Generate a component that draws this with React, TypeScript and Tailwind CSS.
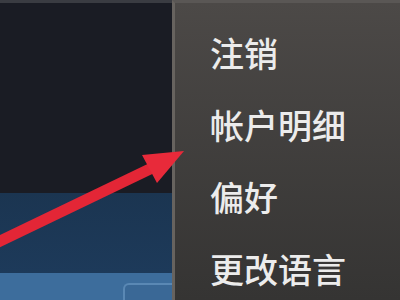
const items = ["注销", "帐户明细", "偏好", "更改语言"];

function Arrow() {
	return (
		<svg
			className="absolute inset-0 pointer-events-none"
			width="400"
			height="300"
			viewBox="0 0 400 300"
		>
			<line
				x1="-6"
				y1="244"
				x2="152"
				y2="168"
				stroke="#e32636"
				strokeWidth="11"
			/>
			<polygon points="184,151 142,155 157,183" fill="#e82a3a" />
		</svg>
	);
}

export default function App() {
	return (
		<div
			className="relative w-[400px] h-[300px] overflow-hidden flex bg-[#1a1c24]"
			style={{ fontFamily: '"Noto Sans CJK SC", "Noto Sans", sans-serif' }}
		>
			<div className="w-[172px] h-full flex flex-col">
				<div className="h-[3px] bg-[#3a3c42]" />
				<div className="h-[190px] bg-[#1a1c24]" />
				<div className="h-[80px] bg-gradient-to-b from-[#1b3551] to-[#1d3a5a]" />
				<div className="flex-1 bg-[#3d6d9c] pt-[10px] pl-[123px]">
					<div className="h-full rounded-tl-[6px] border-t-2 border-l-2 border-[#5a88b4] bg-[#3a6896]" />
				</div>
			</div>

			<div className="flex-1 h-full flex flex-col border-l-[3px] border-[#67635f] border-t-[3px] border-t-[#5a5755] bg-gradient-to-b from-[#4c4947] to-[#353433]">
				<ul className="pl-[35px] pt-[14px] flex flex-col">
					{items.map((item, index) => (
						<li
							key={index}
							className="h-[72px] leading-[72px] text-[34px] font-medium text-[#ececec] tracking-[0px]"
						>
							{item}
						</li>
					))}
				</ul>
			</div>

			<Arrow />
		</div>
	);
}
